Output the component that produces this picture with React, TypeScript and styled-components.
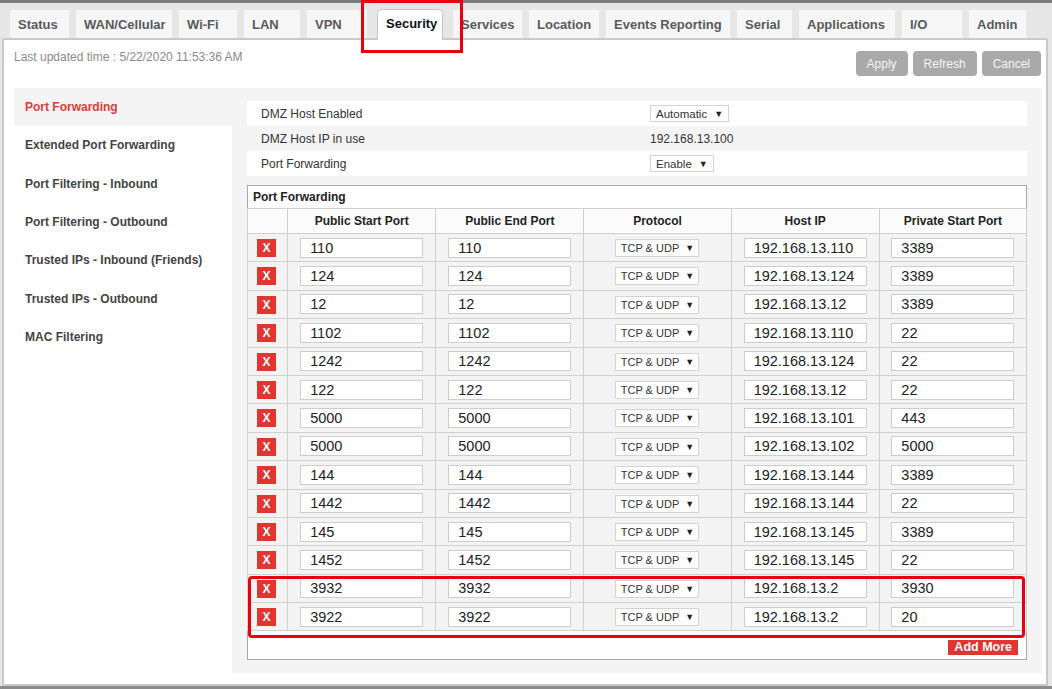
import React from 'react';
import styled, { createGlobalStyle } from 'styled-components';

const GlobalStyle = createGlobalStyle`
  html, body {
    margin: 0;
    padding: 0;
    background: #ffffff;
    font-family: "Liberation Sans", Arial, sans-serif;
  }
`;

const tabs = [
  { label: 'Status', w: 59 },
  { label: 'WAN/Cellular', w: 96 },
  { label: 'Wi-Fi', w: 58 },
  { label: 'LAN', w: 56 },
  { label: 'VPN', w: 60 },
  { label: 'Security', w: 66, active: true },
  { label: 'Services', w: 69 },
  { label: 'Location', w: 70 },
  { label: 'Events Reporting', w: 124 },
  { label: 'Serial', w: 55 },
  { label: 'Applications', w: 96 },
  { label: 'I/O', w: 60 },
  { label: 'Admin', w: 57 },
];

const menu = [
  'Port Forwarding',
  'Extended Port Forwarding',
  'Port Filtering - Inbound',
  'Port Filtering - Outbound',
  'Trusted IPs - Inbound (Friends)',
  'Trusted IPs - Outbound',
  'MAC Filtering',
];

const rules: [string, string, string, string][] = [
  ['110', '110', '192.168.13.110', '3389'],
  ['124', '124', '192.168.13.124', '3389'],
  ['12', '12', '192.168.13.12', '3389'],
  ['1102', '1102', '192.168.13.110', '22'],
  ['1242', '1242', '192.168.13.124', '22'],
  ['122', '122', '192.168.13.12', '22'],
  ['5000', '5000', '192.168.13.101', '443'],
  ['5000', '5000', '192.168.13.102', '5000'],
  ['144', '144', '192.168.13.144', '3389'],
  ['1442', '1442', '192.168.13.144', '22'],
  ['145', '145', '192.168.13.145', '3389'],
  ['1452', '1452', '192.168.13.145', '22'],
  ['3932', '3932', '192.168.13.2', '3930'],
  ['3922', '3922', '192.168.13.2', '20'],
];

function App() {
  return (
    <>
      <GlobalStyle />
      <Page>
        <TabBar>
          {tabs.map((t) => (
            <Tab key={t.label} $w={t.w} $active={t.active}>
              {t.label}
            </Tab>
          ))}
        </TabBar>
        <Panel>
          <Header>
            <Updated>Last updated time : 5/22/2020 11:53:36 AM</Updated>
            <Actions>
              <ActionBtn>Apply</ActionBtn>
              <ActionBtn>Refresh</ActionBtn>
              <ActionBtn>Cancel</ActionBtn>
            </Actions>
          </Header>
          <Body>
            <Sidebar>
              {menu.map((m, i) => (
                <MenuItem key={m} $active={i === 0}>
                  {m}
                </MenuItem>
              ))}
            </Sidebar>
            <Content>
              <InfoRow $white>
                <InfoLabel>DMZ Host Enabled</InfoLabel>
                <SelectBox>
                  Automatic <Arrow>▼</Arrow>
                </SelectBox>
              </InfoRow>
              <InfoRow>
                <InfoLabel>DMZ Host IP in use</InfoLabel>
                <InfoValue>192.168.13.100</InfoValue>
              </InfoRow>
              <InfoRow $white>
                <InfoLabel>Port Forwarding</InfoLabel>
                <SelectBox>
                  Enable <Arrow>▼</Arrow>
                </SelectBox>
              </InfoRow>

              <Table>
                <colgroup>
                  <col style={{ width: 40 }} />
                  <col style={{ width: 148 }} />
                  <col style={{ width: 148 }} />
                  <col style={{ width: 147 }} />
                  <col style={{ width: 148 }} />
                  <col style={{ width: 147 }} />
                </colgroup>
                <tbody>
                  <tr>
                    <TitleCell colSpan={6}>Port Forwarding</TitleCell>
                  </tr>
                  <tr>
                    <Th />
                    <Th>Public Start Port</Th>
                    <Th>Public End Port</Th>
                    <Th>Protocol</Th>
                    <Th>Host IP</Th>
                    <Th>Private Start Port</Th>
                  </tr>
                  {rules.map((r, i) => (
                    <DataRow key={i}>
                      <Td>
                        <DeleteBtn>X</DeleteBtn>
                      </Td>
                      <Td>
                        <Field readOnly value={r[0]} />
                      </Td>
                      <Td>
                        <Field readOnly value={r[1]} />
                      </Td>
                      <Td>
                        <ProtoBox>
                          TCP &amp; UDP <Arrow>▼</Arrow>
                        </ProtoBox>
                      </Td>
                      <Td>
                        <Field readOnly value={r[2]} />
                      </Td>
                      <Td>
                        <Field readOnly value={r[3]} />
                      </Td>
                    </DataRow>
                  ))}
                  <tr>
                    <FooterCell colSpan={6}>
                      <AddMore>Add More</AddMore>
                    </FooterCell>
                  </tr>
                </tbody>
              </Table>
            </Content>
          </Body>
        </Panel>
        <TabHighlight />
        <RowsHighlight />
      </Page>
    </>
  );
}

export default App;

const Page = styled.div`
  position: relative;
  height: 689px;
  box-sizing: border-box;
  display: flex;
  flex-direction: column;
  background: #e6e6e6;
  border-top: 3px solid #7c7c7c;
  border-bottom: 3px solid #8c8c8c;
  padding: 0 4px 0 2px;
`;

const TabBar = styled.div`
  display: flex;
  align-items: flex-end;
  gap: 7px;
  height: 35px;
  padding-left: 8px;
  flex-shrink: 0;
`;

const Tab = styled.div<{ $w: number; $active?: boolean }>`
  position: relative;
  z-index: 2;
  box-sizing: border-box;
  width: ${(p) => p.$w}px;
  height: ${(p) => (p.$active ? 31 : 28)}px;
  margin: ${(p) => (p.$active ? '0 3px -2px' : '0')};
  padding-left: 8px;
  padding-bottom: ${(p) => (p.$active ? 3 : 0)}px;
  display: flex;
  align-items: center;
  font-size: 13px;
  font-weight: bold;
  white-space: nowrap;
  color: ${(p) => (p.$active ? '#111' : '#5a5a5a')};
  background: ${(p) => (p.$active ? '#ffffff' : '#f6f6f6')};
  border: ${(p) => (p.$active ? '1px solid #c6c6c6' : 'none')};
  border-bottom: none;
  border-radius: ${(p) => (p.$active ? '5px 5px 0 0' : '0')};
`;

const Panel = styled.div`
  flex: 1;
  display: flex;
  flex-direction: column;
  background: #ffffff;
  border: 2px solid #c9c9c9;
  border-radius: 2px;
  padding: 0 4px 11px 10px;
`;

const Header = styled.div`
  display: flex;
  justify-content: space-between;
  align-items: flex-start;
  height: 48px;
  padding-top: 10px;
  box-sizing: border-box;
  flex-shrink: 0;
`;

const Updated = styled.div`
  font-size: 12px;
  line-height: 14px;
  color: #8a8a8a;
`;

const Actions = styled.div`
  display: flex;
  gap: 5px;
  margin-top: 1px;
  margin-right: 1px;
`;

const ActionBtn = styled.button`
  height: 25px;
  padding: 0 11px;
  border: none;
  border-radius: 4px;
  background: #a9a9a9;
  color: #f4f4f4;
  font-family: "Liberation Sans", Arial, sans-serif;
  font-size: 12px;
`;

const Body = styled.div`
  flex: 1;
  display: flex;
`;

const Sidebar = styled.div`
  width: 218px;
  flex-shrink: 0;
  display: flex;
  flex-direction: column;
`;

const MenuItem = styled.div<{ $active?: boolean }>`
  height: 38.3px;
  display: flex;
  align-items: center;
  padding-left: 11px;
  font-size: 12px;
  font-weight: bold;
  color: ${(p) => (p.$active ? '#e03b3b' : '#444444')};
  background: ${(p) => (p.$active ? '#f4f4f4' : 'transparent')};
`;

const Content = styled.div`
  flex: 1;
  background: #f4f4f4;
  padding: 13px 15px;
`;

const InfoRow = styled.div<{ $white?: boolean }>`
  height: 25px;
  display: flex;
  align-items: center;
  background: ${(p) => (p.$white ? '#ffffff' : 'transparent')};
  font-size: 12px;
  color: #333;
`;

const InfoLabel = styled.div`
  width: 403px;
  box-sizing: border-box;
  padding-left: 14px;
`;

const InfoValue = styled.div`
  font-size: 12px;
  color: #333;
`;

const SelectBox = styled.div`
  display: inline-flex;
  align-items: center;
  gap: 7px;
  height: 17px;
  box-sizing: border-box;
  padding: 0 5px;
  border: 1px solid #d4d4d4;
  background: #ffffff;
  font-size: 11.5px;
  color: #333;
  white-space: nowrap;
`;

const Arrow = styled.span`
  font-size: 9px;
  color: #222;
`;

const Table = styled.table`
  margin-top: 9px;
  width: 780px;
  border-collapse: collapse;
  border: 1px solid #a9a9a9;
  background: #ffffff;
  table-layout: fixed;
`;

const TitleCell = styled.td`
  height: 22px;
  padding: 0 5px;
  text-align: left;
  font-size: 12px;
  font-weight: bold;
  color: #222;
  border-bottom: 1px solid #cfcfcf;
`;

const Th = styled.td`
  height: 24px;
  padding: 0;
  text-align: center;
  font-size: 12px;
  font-weight: bold;
  color: #222;
  border: 1px solid #cfcfcf;
  background: #fcfcfc;
`;

const DataRow = styled.tr`
  height: 28.4px;
`;

const Td = styled.td`
  padding: 0;
  text-align: center;
  vertical-align: middle;
  border: 1px solid #d0d0d0;
  background: #f3f3f3;
`;

const DeleteBtn = styled.span`
  display: inline-flex;
  align-items: center;
  justify-content: center;
  width: 19px;
  height: 18px;
  margin-right: 2px;
  background: #e3352f;
  color: #ffffff;
  font-size: 12px;
  font-weight: bold;
  vertical-align: middle;
`;

const Field = styled.input`
  width: 123px;
  height: 20px;
  box-sizing: border-box;
  margin: 0;
  padding: 0 0 0 9px;
  border: 1px solid #cdcdcd;
  background: #ffffff;
  font-family: "Liberation Sans", Arial, sans-serif;
  font-size: 14.5px;
  color: #222;
  vertical-align: middle;
  outline: none;
`;

const ProtoBox = styled(SelectBox)`
  width: 84px;
  height: 18px;
  gap: 6px;
  padding: 0;
  justify-content: center;
  font-size: 11px;
  vertical-align: middle;
`;

const FooterCell = styled.td`
  height: 29px;
  padding: 6px 8px 0 0;
  box-sizing: border-box;
  text-align: right;
  vertical-align: top;
  border-top: 1px solid #d0d0d0;
`;

const AddMore = styled.span`
  display: inline-block;
  height: 15px;
  line-height: 15px;
  padding: 0 6px;
  background: #e3352f;
  color: #ffffff;
  font-size: 12.5px;
  font-weight: bold;
`;

const TabHighlight = styled.div`
  position: absolute;
  top: -3px;
  left: 361px;
  width: 102px;
  height: 53px;
  box-sizing: border-box;
  border: 3px solid #e8000d;
  z-index: 5;
`;

const RowsHighlight = styled.div`
  position: absolute;
  top: 573px;
  left: 248px;
  width: 777px;
  height: 62px;
  box-sizing: border-box;
  border: 3px solid #e8000d;
  border-radius: 4px;
  z-index: 5;
`;
